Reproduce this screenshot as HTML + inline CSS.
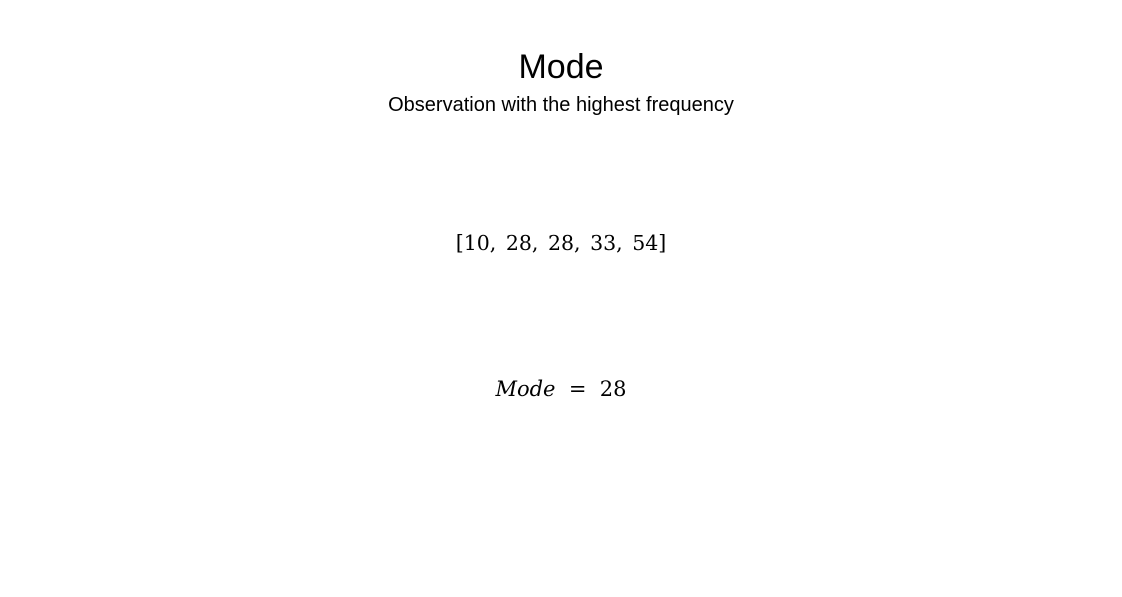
<!DOCTYPE html>
<html><head><style>
html,body{margin:0;padding:0;background:#fff;width:1122px;height:597px;overflow:hidden}
.t{position:absolute;left:0;width:1122px;text-align:center;color:#000}
</style></head><body>
<div class="t" style="top:48px;font:500 34px 'Liberation Sans',sans-serif;">Mode</div>
<div class="t" style="top:94px;font:20px 'Liberation Sans',sans-serif;">Observation with the highest frequency</div>
<div class="t" style="top:231px;font:20.5px 'DejaVu Serif',serif;word-spacing:3px;">[10, 28, 28, 33, 54]</div>
<div class="t" style="top:377px;font:21px 'DejaVu Serif',serif;"><i>Mode</i>&nbsp; = &nbsp;28</div>
</body></html>
